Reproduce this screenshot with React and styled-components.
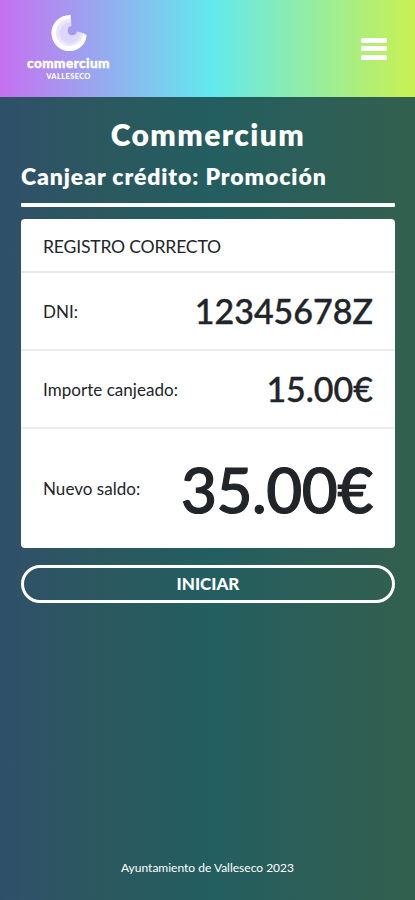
import styled, { createGlobalStyle } from 'styled-components';

const GlobalStyle = createGlobalStyle`
    * {
        box-sizing: border-box;
    }

    body {
        margin: 0;
        font-family: 'Lato', sans-serif;
    }
`;

const Page = styled.div`
    display: flex;
    flex-direction: column;
    min-height: 100vh;
    color: #fff;
    background: linear-gradient(90deg, #30506a 0%, #2b585f 24%, #235e60 51%, #2f5f54 84%, #32604e 100%);
`;

const Header = styled.header`
    display: flex;
    align-items: center;
    justify-content: space-between;
    height: 97px;
    padding: 0 28px 0 26px;
    background: linear-gradient(90deg, #c670f0 0%, #63e9ee 51%, #c9f052 100%);
`;

const Brand = styled.div`
    display: flex;
    flex-direction: column;
    align-items: center;
    width: 85px;
    height: 69px;
`;

const BrandName = styled.span`
    margin-top: 3px;
    font-size: 13.6px;
    font-weight: 900;
    line-height: 16px;
    letter-spacing: 0.4px;
    white-space: nowrap;
    -webkit-text-stroke: 0.4px #fff;
`;

const BrandPlace = styled.span`
    margin-top: 1px;
    font-size: 7.5px;
    font-weight: 900;
    line-height: 10px;
    letter-spacing: 0.35px;
`;

const MenuButton = styled.button`
    display: flex;
    flex-direction: column;
    gap: 3.5px;
    width: 26px;
    padding: 0;
    border: none;
    background: none;
    cursor: pointer;
`;

const MenuBar = styled.span`
    height: 5px;
    border-radius: 1.5px;
    background: #fff;
`;

const Main = styled.main`
    display: flex;
    flex: 1;
    flex-direction: column;
    padding: 19px 20px 0 21px;
`;

const Title = styled.h1`
    margin: 0;
    font-size: 30px;
    font-weight: 800;
    line-height: 36px;
    letter-spacing: 1.4px;
    text-align: center;
`;

const Subtitle = styled.h2`
    margin: 10px 0 0;
    font-size: 23px;
    font-weight: 800;
    line-height: 28px;
    letter-spacing: 0.9px;
    white-space: nowrap;
`;

const Divider = styled.hr`
    width: 100%;
    height: 4px;
    margin: 13px 0 12px;
    border: none;
    border-radius: 1px;
    background: #fff;
`;

const Card = styled.section`
    border-radius: 4px;
    background: #fff;
    color: #212529;
`;

const CardHeader = styled.div`
    display: flex;
    align-items: center;
    height: 54px;
    padding: 3px 22px 0;
    border-bottom: 2px solid #e8e8e8;
    font-size: 17.6px;
    letter-spacing: -0.2px;
`;

const Row = styled.div`
    display: flex;
    align-items: center;
    justify-content: space-between;
    height: ${({ $height }) => $height}px;
    padding: 0 22px;
    border-bottom: 2px solid #ebebeb;

    &:last-child {
        border-bottom: none;
    }
`;

const Label = styled.span`
    font-size: 17px;
    letter-spacing: 0.04px;
    white-space: nowrap;
`;

const Value = styled.span`
    font-size: ${({ $large }) => ($large ? '62px' : '34px')};
    font-weight: 500;
    line-height: 1;
    letter-spacing: ${({ $large }) => ($large ? '-0.4px' : '0')};
    -webkit-text-stroke: ${({ $large }) => ($large ? '1.2px' : '0.4px')} #212529;
`;

const StartButton = styled.button`
    height: 38px;
    margin-top: 17px;
    padding: 0 0 1px;
    border: 3px solid #fff;
    border-radius: 19px;
    background: transparent;
    color: #fff;
    font-family: 'Lato', sans-serif;
    font-size: 17px;
    font-weight: 900;
    cursor: pointer;
`;

const Footer = styled.footer`
    padding: 0 0 23px;
    font-size: 12px;
    line-height: 18px;
    text-align: center;
`;

const rows = [
    { label: 'DNI:', value: '12345678Z', height: 78 },
    { label: 'Importe canjeado:', value: '15.00€', height: 78 },
    { label: 'Nuevo saldo:', value: '35.00€', height: 119, large: true },
];

function Logo() {
    return (
        <svg width="38" height="38" viewBox="0 0 38 38" fill="#fff">
            <path d="M20.5 1C9 1 1.5 9.5 1.5 19C1.5 29.5 10 37 19 37C28.5 37 35.5 31 36.5 21.5C36.5 19.5 34 19 27 17.5A4.7 4.7 0 1 1 21.5 12Z" opacity="0.62" />
            <path d="M20.5 1C9 1 1.5 9.5 1.5 19C1.5 29.5 10 37 19 37C28.5 37 35.5 31 36.5 21.5L33 20A13.5 13.5 0 1 1 20.5 5Z" />
            <path d="M20.5 5A13.5 13.5 0 1 0 33 20L30.5 19.5A10.5 10.5 0 1 1 21 8.5Z" opacity="0.4" />
        </svg>
    );
}

export default function App() {
    return (
        <>
            <GlobalStyle />
            <Page>
                <Header>
                    <Brand>
                        <Logo />
                        <BrandName>commercium</BrandName>
                        <BrandPlace>VALLESECO</BrandPlace>
                    </Brand>
                    <MenuButton aria-label="Menú">
                        <MenuBar />
                        <MenuBar />
                        <MenuBar />
                    </MenuButton>
                </Header>
                <Main>
                    <Title>Commercium</Title>
                    <Subtitle>Canjear crédito: Promoción</Subtitle>
                    <Divider />
                    <Card>
                        <CardHeader>REGISTRO CORRECTO</CardHeader>
                        {rows.map((row) => (
                            <Row key={row.label} $height={row.height}>
                                <Label>{row.label}</Label>
                                <Value $large={row.large}>{row.value}</Value>
                            </Row>
                        ))}
                    </Card>
                    <StartButton>INICIAR</StartButton>
                </Main>
                <Footer>Ayuntamiento de Valleseco 2023</Footer>
            </Page>
        </>
    );
}
